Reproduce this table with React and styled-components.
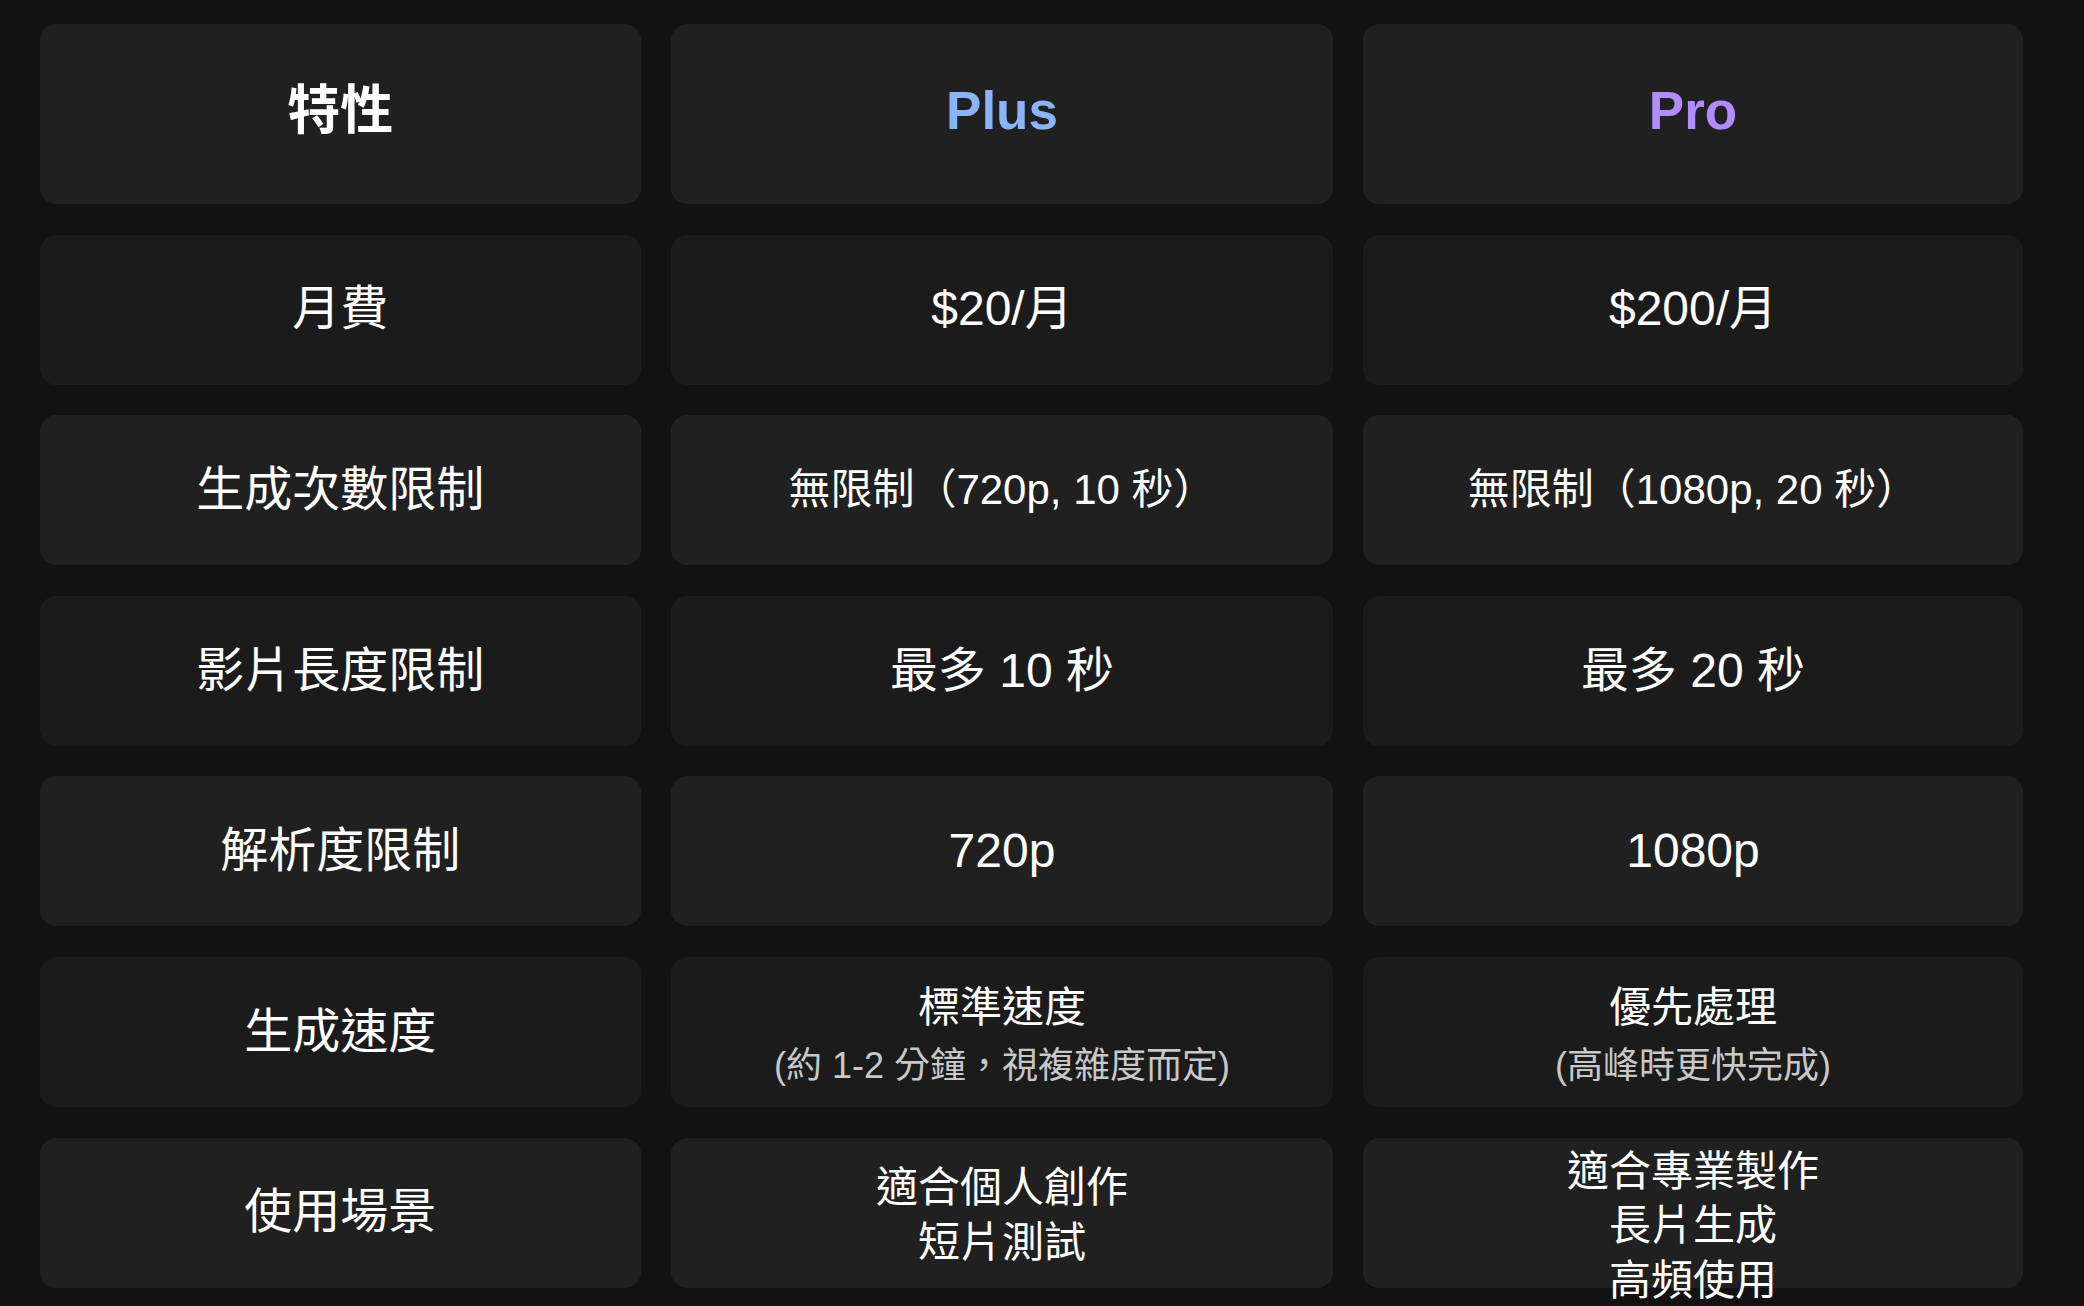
import React from "react";
import styled, { createGlobalStyle } from "styled-components";

const GlobalStyle = createGlobalStyle`
  html, body {
    margin: 0;
    padding: 0;
    background: #121212;
  }
  body {
    font-family: "Liberation Sans", "Noto Sans CJK TC", sans-serif;
    color: #ffffff;
  }
`;

const Page = styled.div`
  box-sizing: border-box;
  width: 2084px;
  min-height: 1306px;
  padding: 24px 0 0 39.5px;
  background: #121212;
`;

const Table = styled.div`
  display: grid;
  grid-template-columns: 601.5px 662px 660px;
  grid-auto-rows: 150px;
  grid-template-rows: 180px;
  column-gap: 30px;
  row-gap: 30.6px;
`;

const Cell = styled.div`
  box-sizing: border-box;
  display: flex;
  flex-direction: column;
  align-items: center;
  justify-content: safe center;
  text-align: center;
  border-radius: 16px;
  padding-top: ${(p) => (p.$multi ? "7px" : "0")};
  background: ${(p) => (p.$alt ? "#1b1b1b" : "#202020")};
  font-size: ${(p) => (p.$small ? "42px" : "48px")};
  line-height: 1.3;
  color: #ffffff;
  overflow: visible;
  min-width: 0;
  min-height: 0;
`;

const HeaderCell = styled(Cell)`
  font-size: 53px;
  font-weight: 700;
  padding-bottom: 6px;
  color: ${(p) => p.$color || "#ffffff"};
`;

const Line = styled.div`
  white-space: nowrap;
`;

const Sub = styled.div`
  white-space: nowrap;
  font-size: 36px;
  line-height: 1.3;
  color: #c8c8c8;
  margin-top: 8px;
`;

const rows = [
  { label: "月費", plus: ["$20/月"], pro: ["$200/月"] },
  {
    label: "生成次數限制",
    plus: ["無限制（720p, 10 秒）"],
    pro: ["無限制（1080p, 20 秒）"],
    small: true,
  },
  { label: "影片長度限制", plus: ["最多 10 秒"], pro: ["最多 20 秒"] },
  { label: "解析度限制", plus: ["720p"], pro: ["1080p"] },
  {
    label: "生成速度",
    plus: ["標準速度"],
    plusSub: "(約 1-2 分鐘，視複雜度而定)",
    pro: ["優先處理"],
    proSub: "(高峰時更快完成)",
    small: true,
  },
  {
    label: "使用場景",
    plus: ["適合個人創作", "短片測試"],
    pro: ["適合專業製作", "長片生成", "高頻使用"],
    small: true,
  },
];

function ValueCell({ lines, sub, alt, small }) {
  const multi = lines.length > 1 || Boolean(sub);
  return (
    <Cell $alt={alt} $small={small} $multi={multi}>
      {lines.map((l) => (
        <Line key={l}>{l}</Line>
      ))}
      {sub && <Sub>{sub}</Sub>}
    </Cell>
  );
}

export default function App() {
  return (
    <>
      <GlobalStyle />
      <Page>
        <Table>
          <HeaderCell>特性</HeaderCell>
          <HeaderCell $color="#8ab4f8">Plus</HeaderCell>
          <HeaderCell $color="#b08cff">Pro</HeaderCell>
          {rows.map((r, i) => {
            const alt = i % 2 === 0;
            return (
              <React.Fragment key={r.label}>
                <Cell $alt={alt}>
                  <Line>{r.label}</Line>
                </Cell>
                <ValueCell lines={r.plus} sub={r.plusSub} alt={alt} small={r.small} />
                <ValueCell lines={r.pro} sub={r.proSub} alt={alt} small={r.small} />
              </React.Fragment>
            );
          })}
        </Table>
      </Page>
    </>
  );
}
